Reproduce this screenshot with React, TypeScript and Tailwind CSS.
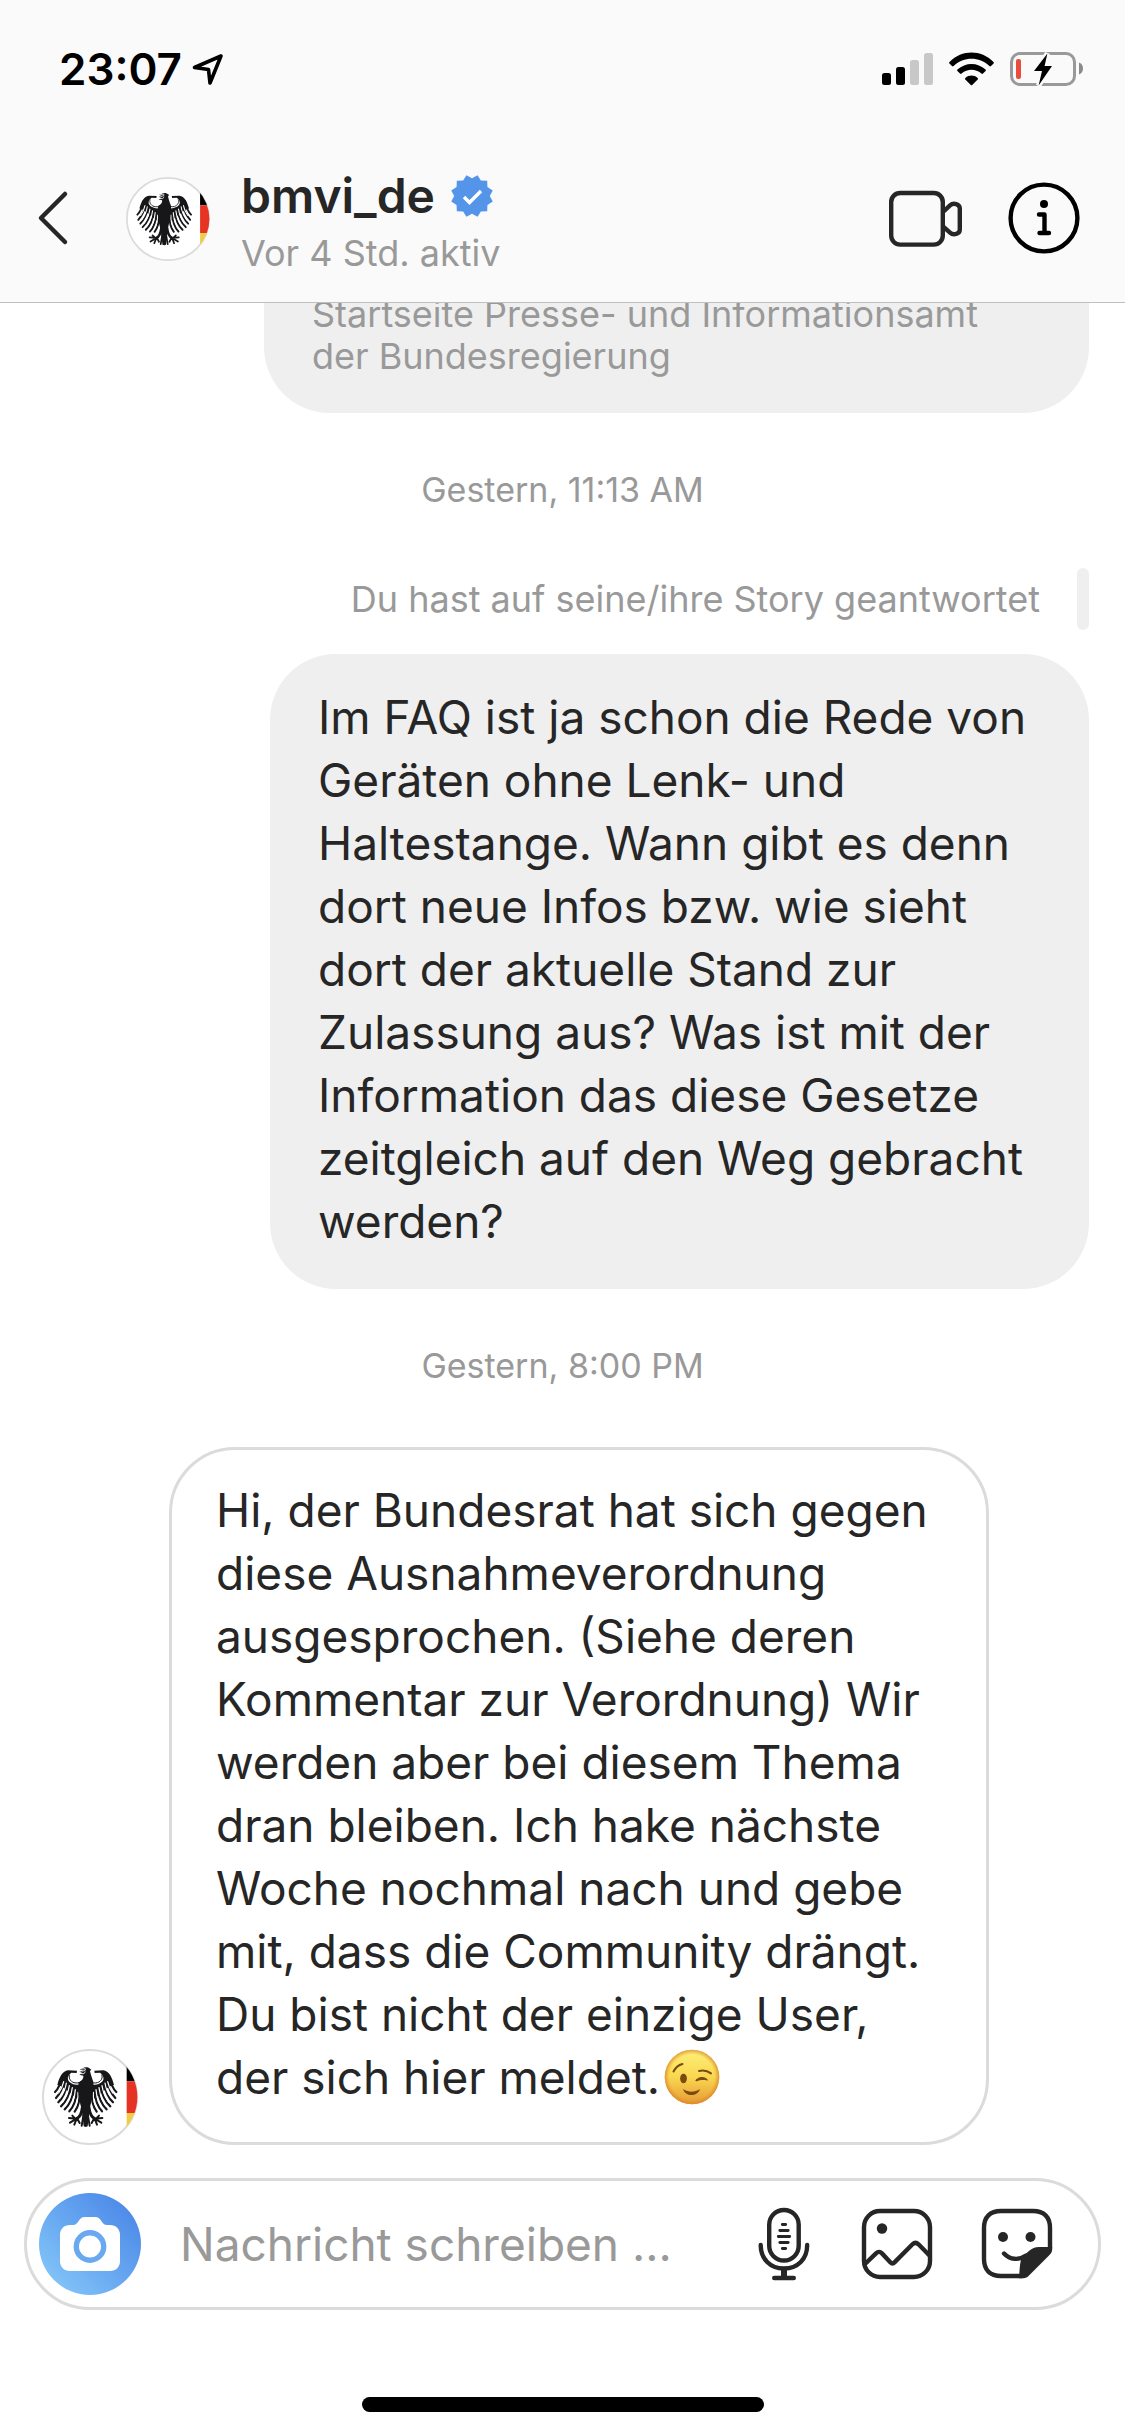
import type { ReactNode } from "react";

const sent =
  "Im FAQ ist ja schon die Rede von Geräten ohne Lenk- und Haltestange. Wann gibt es denn dort neue Infos bzw. wie sieht dort der aktuelle Stand zur Zulassung aus? Was ist mit der Information das diese Gesetze zeitgleich auf den Weg gebracht werden?";

const received =
  "Hi, der Bundesrat hat sich gegen diese Ausnahmeverordnung ausgesprochen. (Siehe deren Kommentar zur Verordnung) Wir werden aber bei diesem Thema dran bleiben. Ich hake nächste Woche nochmal nach und gebe mit, dass die Community drängt. Du bist nicht der einzige User, der sich hier meldet.";

function EagleHalf() {
  return (
    <g>
      <path
        d="M78 64 C62 66 52 84 46 108 L58 112 C72 122 92 138 106 150 L122 152 L124 104 C108 112 84 106 78 92 C76 84 80 76 88 71 L104 72 L105 65 Z"
        fill="#17171a"
      />
      <path
        d="M83 77 C79 86 84 97 96 101 C104 103 112 102 117 97"
        fill="none"
        stroke="#17171a"
        strokeWidth="3"
      />
      <g fill="none" stroke="#17171a" strokeWidth="6.5" strokeLinecap="round">
        <path d="M60 82 C56 104 48 120 39 129" />
        <path d="M66 96 C62 118 54 134 42 147" />
        <path d="M76 104 C71 128 62 147 49 160" />
        <path d="M86 112 C82 138 72 158 57 172" />
        <path d="M95 118 C92 146 82 168 68 181" />
        <path d="M104 124 C103 152 94 174 82 187" />
        <path d="M112 132 C114 156 108 174 98 188" />
      </g>
      <g fill="none" stroke="#fff" strokeWidth="3.6" strokeLinecap="round">
        <path d="M65 98 C62 112 56 124 50 132" />
        <path d="M73 102 C70 122 62 137 54 147" />
        <path d="M82 110 C79 130 71 147 61 160" />
        <path d="M91 116 C88 138 80 158 69 171" />
        <path d="M100 122 C98 146 91 166 80 178" />
        <path d="M108 130 C109 152 103 170 95 181" />
      </g>
      <g fill="none" stroke="#17171a" strokeLinecap="round" strokeLinejoin="round">
        <path d="M121 176 C119 194 112 205 104 209" strokeWidth="9" />
        <path d="M104 209 L81 207 M104 209 L84 221 M104 209 L97 227 M106 209 L113 222 M99 208 L91 200" strokeWidth="6" />
        <path d="M126 190 L119 230" strokeWidth="6" />
      </g>
    </g>
  );
}

function Avatar({ className }: { className: string }) {
  return (
    <svg viewBox="0 0 288 288" className={className} role="img" aria-label="bmvi_de">
      <defs>
        <clipPath id="avatar-clip">
          <circle cx="144" cy="144" r="142" />
        </clipPath>
      </defs>
      <circle cx="144" cy="144" r="141" fill="#fff" stroke="#dbdbdb" strokeWidth="6" />
      <g clipPath="url(#avatar-clip)">
        <rect x="254" width="34" height="97" fill="#000" />
        <rect x="254" y="97" width="34" height="95" fill="#e63323" />
        <rect x="254" y="192" width="34" height="96" fill="#f3cc46" />
      </g>
      <EagleHalf />
      <g transform="translate(262 0) scale(-1 1)">
        <EagleHalf />
      </g>
      <path
        d="M122 58 C128 53 138 54 144 59 L148 62 L144 66 C146 76 150 88 154 98 C156 120 150 150 143 180 L137 232 L131 234 L125 232 L119 180 C110 150 106 120 110 100 C118 96 125 90 124 80 L112 77 L122 72 L112 68 L124 66 L114 61 Z"
        fill="#17171a"
      />
      <path d="M117 60 L130 59 L129 65 L120 66 M116 74 L126 74 L130 68" fill="none" stroke="#fff" strokeWidth="2.5" />
    </svg>
  );
}

function VerifiedBadge() {
  const points = Array.from({ length: 24 }, (_, i) => {
    const r = i % 2 === 0 ? 21.5 : 17.8;
    const a = ((i + 1) * Math.PI) / 12;
    return `${(21 + r * Math.sin(a)).toFixed(2)},${(21 - r * Math.cos(a)).toFixed(2)}`;
  }).join(" ");
  return (
    <svg viewBox="0 0 42 42" className="h-[42px] w-[42px] overflow-visible" role="img" aria-label="Verifiziert">
      <polygon points={points} fill="#5495e9" />
      <path d="M13 22 L18.5 27.5 L30 16" fill="none" stroke="#fff" strokeWidth="3.4" />
    </svg>
  );
}

function StatusBar() {
  return (
    <div className="flex h-[138px] items-center justify-between pr-[42px] pl-[59px]">
      <div className="flex items-center gap-[10px] text-black">
        <span className="text-[44px] leading-[54px] font-semibold">23:07</span>
        <svg viewBox="0 0 32 32" className="h-8 w-8" aria-hidden="true">
          <path
            d="M29 3 L2.5 14.5 L16.5 16.5 L18 30 Z"
            fill="none"
            stroke="#000"
            strokeWidth="3.6"
            strokeLinejoin="round"
          />
        </svg>
      </div>
      <div className="flex items-center gap-4">
        <svg viewBox="0 0 51 34" className="h-[34px] w-[51px]" aria-hidden="true">
          <rect x="0" y="21" width="9" height="12" rx="2.5" />
          <rect x="14" y="15" width="9" height="18" rx="2.5" />
          <rect x="28" y="8" width="9" height="25" rx="2.5" fill="#c8c8c8" />
          <rect x="42" y="1" width="9" height="32" rx="2.5" fill="#c8c8c8" />
        </svg>
        <svg viewBox="0 0 45 34" className="h-[34px] w-[45px]" aria-hidden="true">
          <path d="M0.5 10 C13 -2.6 32 -2.6 44.5 10 C45 10.6 45 11 44.6 11.4 L42 14 C41.4 14.6 41 14.6 40.4 14 C30 4.4 15 4.4 4.6 14 C4 14.6 3.6 14.6 3 14 L0.4 11.4 C0 11 0 10.6 0.5 10 Z" />
          <path d="M8.4 17.6 C16.5 10 28.5 10 36.6 17.6 C37 18.2 37 18.6 36.6 19 L34 21.6 C33.4 22.2 33 22.2 32.4 21.6 C26.5 16.6 18.5 16.6 12.6 21.6 C12 22.2 11.6 22.2 11 21.6 L8.4 19 C8 18.6 8 18.2 8.4 17.6 Z" />
          <path d="M16.4 26 C20 22.8 25 22.8 28.6 26 C29.2 26.6 29.2 27 28.7 27.5 L23.2 33 C22.7 33.4 22.3 33.4 21.8 33 L16.3 27.5 C15.8 27 15.8 26.6 16.4 26 Z" />
        </svg>
        <svg viewBox="0 0 73 36" className="h-9 w-[73px]" aria-hidden="true">
          <rect x="1.5" y="2.5" width="63" height="31" rx="8.5" fill="none" stroke="#999" strokeWidth="3" />
          <path d="M69 11.5 C74.3 13 74.3 22 69 23.5 Z" fill="#8a8a8a" />
          <rect x="6" y="8" width="5" height="20" rx="2" fill="#e94d3d" />
          <path d="M37.4 2.5 L24 20 H32 L28.6 34.5 L42 15 H34.6 Z" stroke="#fafafa" strokeWidth="5" />
          <path d="M37.4 2.5 L24 20 H32 L28.6 34.5 L42 15 H34.6 Z" />
        </svg>
      </div>
    </div>
  );
}

function ChatHeader() {
  return (
    <div className="flex h-[164px] items-start pr-[45px] pl-[37px]">
      <button type="button" aria-label="Zurück" className="mt-[52px] h-[56px] w-[32px]">
        <svg viewBox="0 0 32 56" className="h-full w-full">
          <path
            d="M28 4 L4 28 L28 52"
            fill="none"
            stroke="#262626"
            strokeWidth="4.5"
            strokeLinecap="round"
            strokeLinejoin="round"
          />
        </svg>
      </button>
      <Avatar className="mt-[39px] ml-[57px] h-[84px] w-[84px]" />
      <div className="mt-[28px] ml-[31px]">
        <div className="flex items-center gap-4">
          <h1 className="text-[48px] leading-[60px] font-semibold text-[#262626]">bmvi_de</h1>
          <VerifiedBadge />
        </div>
        <p className="text-[36px] leading-[54px] text-[#999]">Vor 4 Std. aktiv</p>
      </div>
      <div className="mt-[43px] ml-auto flex items-center gap-[46px]">
        <button type="button" aria-label="Videoanruf" className="h-[74px] w-[74px]">
          <svg viewBox="0 0 74 74" className="h-full w-full" fill="none" stroke="#262626" strokeWidth="4.4">
            <rect x="3.2" y="12" width="51.6" height="51.6" rx="9" />
            <path
              d="M55 31 L62 24.4 C65.5 21.4 71.8 23 71.8 27.6 L71.8 48.4 C71.8 53 65.5 54.8 62 51.6 L55 45.4"
              strokeLinejoin="round"
            />
          </svg>
        </button>
        <button type="button" aria-label="Info" className="h-[72px] w-[72px]">
          <svg viewBox="0 0 72 72" className="h-full w-full">
            <circle cx="36" cy="36" r="33.4" fill="none" stroke="#000" strokeWidth="4.4" />
            <circle cx="36" cy="22" r="4" />
            <path
              d="M31 32.5 H36.5 V51 M31.5 51 H41"
              fill="none"
              stroke="#000"
              strokeWidth="4.4"
              strokeLinecap="round"
              strokeLinejoin="round"
            />
          </svg>
        </button>
      </div>
    </div>
  );
}

function Timestamp({ children }: { children: ReactNode }) {
  return <p className="text-center text-[34px] leading-[40px] text-[#999]">{children}</p>;
}

function WinkEmoji() {
  return (
    <svg viewBox="0 0 56 56" className="ml-1 inline-block h-14 w-14 align-[-11px]" role="img" aria-label="😉">
      <defs>
        <linearGradient id="wink-face" x1="0" y1="0" x2="0" y2="1">
          <stop offset="0" stopColor="#fdf07a" />
          <stop offset="0.5" stopColor="#f9d74f" />
          <stop offset="1" stopColor="#e79a35" />
        </linearGradient>
        <radialGradient id="wink-edge">
          <stop offset="0.82" stopColor="#e0902c" stopOpacity="0" />
          <stop offset="1" stopColor="#d9822a" stopOpacity="0.75" />
        </radialGradient>
      </defs>
      <circle cx="28" cy="28" r="27.3" fill="url(#wink-face)" />
      <circle cx="28" cy="28" r="27.3" fill="url(#wink-edge)" />
      <ellipse cx="19.5" cy="29.5" rx="3.4" ry="4.8" fill="#7a4a12" />
      <path
        d="M9.5 22.5 C11.5 18.5 14.5 16 18.5 15 M35 22 C39 20.8 43.5 21.8 47 24.4"
        fill="none"
        stroke="#7a4a12"
        strokeWidth="2"
        strokeLinecap="round"
      />
      <path d="M32 31 C35.5 27.6 40.5 27.6 43.5 31 C40 30 35.5 30.2 32 32 Z" stroke="#7a4a12" fill="#7a4a12" />
      <path d="M19 40 C24.5 43.6 30.5 43.6 36 40 C33.5 48 21.5 48 19 40 Z" fill="#7a4a12" />
    </svg>
  );
}

function Thread() {
  return (
    <main className="flex min-h-0 flex-1 flex-col justify-end overflow-hidden bg-white pr-9 pb-[33px]">
      <div className="w-[825px] shrink-0 self-end rounded-b-[66px] bg-[#efefef] px-12 pt-6 pb-[36px] text-[36px] leading-[42px] text-[#999]">
        Startseite Presse- und Informationsamt der Bundesregierung
      </div>
      <div className="mt-[57px] -mr-9 shrink-0">
        <Timestamp>Gestern, 11:13 AM</Timestamp>
      </div>
      <div className="mt-[58px] flex shrink-0 items-center justify-end gap-[37px]">
        <p className="text-[36px] leading-[42px] text-[#999]">Du hast auf seine/ihre Story geantwortet</p>
        <div className="h-[62px] w-3 rounded-full bg-[#efefef]" />
      </div>
      <div className="mt-6 w-[819px] shrink-0 self-end rounded-[66px] bg-[#efefef] pt-8 pr-[56px] pb-9 pl-12 text-[46px] leading-[63px] text-[#262626]">
        {sent}
      </div>
      <div className="mt-[57px] -mr-9 shrink-0">
        <Timestamp>Gestern, 8:00 PM</Timestamp>
      </div>
      <div className="mt-[61px] flex shrink-0 items-end gap-[31px] pl-[42px]">
        <Avatar className="h-24 w-24" />
        <div className="w-[820px] rounded-[66px] border-3 border-[#dbdbdb] pt-[29px] pr-[50px] pb-[33px] pl-11 text-[46px] leading-[63px] text-[#262626]">
          {received}
          <WinkEmoji />
        </div>
      </div>
    </main>
  );
}

function Composer() {
  return (
    <form
      className="mx-6 flex h-[132px] items-center rounded-full border-3 border-[#dbdbdb] bg-white pr-[45px] pl-3"
      onSubmit={(e) => e.preventDefault()}
    >
      <button
        type="button"
        aria-label="Kamera"
        className="flex h-[102px] w-[102px] shrink-0 items-center justify-center rounded-full bg-linear-to-tr from-[#8accfa] to-[#4680e5]"
      >
        <svg viewBox="0 0 60 54" className="h-[54px] w-[60px]">
          <path
            d="M10 8 H13 C19 8 18 0 25 0 H35 C42 0 41 8 47 8 H50 C56 8 60 12 60 18 V44 C60 50 56 54 50 54 H10 C4 54 0 50 0 44 V18 C0 12 4 8 10 8 Z"
            fill="#fff"
          />
          <circle cx="30" cy="29.5" r="13.7" fill="none" stroke="#6aa9f0" strokeWidth="5.4" />
        </svg>
      </button>
      <input
        type="text"
        aria-label="Nachricht"
        placeholder="Nachricht schreiben ..."
        className="ml-[39px] h-[60px] min-w-0 flex-1 bg-transparent text-[46px] text-[#262626] outline-none placeholder:text-[#999]"
      />
      <div className="flex shrink-0 items-center gap-[48px]">
        <button type="button" aria-label="Sprachnachricht" className="h-[74px] w-[56px]">
          <svg viewBox="0 0 56 74" className="h-full w-full" fill="none" stroke="#262626" strokeLinecap="round">
            <rect x="12.2" y="3" width="29.5" height="50.5" rx="14.7" strokeWidth="4.4" />
            <path d="M3.7 38 C3.7 52 13.2 61.5 27 61.5 C40.8 61.5 50.2 52 50.2 38" strokeWidth="4.4" />
            <path d="M17.3 71 H36.7" strokeWidth="4.6" />
            <path d="M27 62 V70" strokeWidth="6" strokeLinecap="butt" />
            <path d="M25.3 17.5 H28.7 M22.8 23.5 H31.2 M21.3 29.5 H32.7 M22.8 35.5 H31.2 M25.3 41.5 H28.7" strokeWidth="2.8" />
          </svg>
        </button>
        <button type="button" aria-label="Bild" className="h-[72px] w-[72px]">
          <svg viewBox="0 0 72 72" className="h-full w-full" fill="none" stroke="#262626" strokeWidth="4.4">
            <rect x="3" y="3" width="66" height="66" rx="16" />
            <circle cx="21" cy="20.5" r="5.2" fill="#262626" stroke="none" />
            <path d="M4 56 L15 45.4 Q18 42.4 21 45.4 L29.5 54.4 Q31.5 56.4 33.5 54.4 L51.5 36.3 Q54.5 33.4 57.5 36.3 L69 48" />
          </svg>
        </button>
        <button type="button" aria-label="Sticker" className="h-[72px] w-[72px]">
          <svg viewBox="0 0 72 72" className="h-full w-full" fill="none" stroke="#262626" strokeWidth="4.4">
            <path
              d="M69 40 V20 C69 9 63 3 52 3 H20 C9 3 3 9 3 20 V51 C3 62 9 68 20 68 H41"
              strokeLinecap="round"
            />
            <circle cx="22" cy="29" r="5" fill="#262626" stroke="none" />
            <circle cx="49.5" cy="29" r="5" fill="#262626" stroke="none" />
            <path d="M23 45.5 C29 52 38 52.5 45 47.5" strokeLinecap="round" />
            <path
              d="M71.2 39 V41 C71.2 44 70 45.5 68 47.5 L47.5 68 C45.5 70 44 70.2 41 70.2 H38 C38.5 64 38.5 58 40 51.5 C46 44 50 39.5 58 39 Z"
              fill="#262626"
              stroke="none"
            />
          </svg>
        </button>
      </div>
    </form>
  );
}

export default function App() {
  return (
    <div className="flex h-screen flex-col bg-white font-['Inter','Liberation_Sans',sans-serif]">
      <header className="shrink-0 border-b border-[#c0c0c0] bg-[#fafafa]">
        <StatusBar />
        <ChatHeader />
      </header>
      <Thread />
      <footer className="shrink-0">
        <Composer />
        <div className="mx-auto mt-[87px] mb-6 h-[15px] w-[402px] rounded-full bg-black" />
      </footer>
    </div>
  );
}
